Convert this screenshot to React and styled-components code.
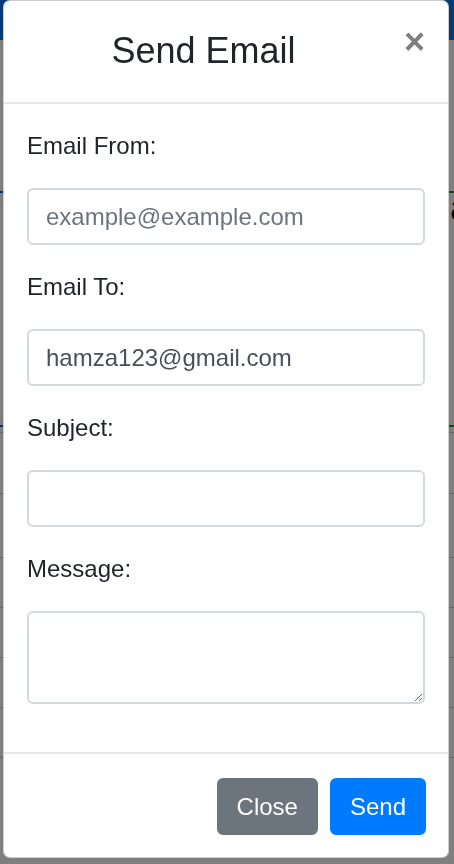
import React from "react";
import styled, { createGlobalStyle } from "styled-components";

const GlobalStyle = createGlobalStyle`
  html, body {
    margin: 0;
    padding: 0;
  }
  body {
    width: 454px;
    height: 864px;
    overflow: hidden;
    background: #ffffff;
    font-family: "Liberation Sans", Arial, sans-serif;
    color: #212529;
  }
  * { box-sizing: border-box; }
`;

/* ---------- page behind the backdrop ---------- */
const Page = styled.div`
  display: flex;
  flex-direction: column;
  height: 864px;
`;

const NavBar = styled.div`
  height: 40px;
  background: #0b74ec;
`;

const Rule = styled.div`
  margin-top: ${(p) => p.$gap}px;
  height: ${(p) => p.$h || 1}px;
  background: ${(p) => p.$color || "#dee2e6"};
`;

const PeekText = styled.div`
  display: flex;
  justify-content: flex-end;
  font-size: 36px;
  line-height: 30px;
  color: #111;
  padding-right: 0;
  margin-right: -16px;
`;

/* ---------- modal ---------- */
const Backdrop = styled.div`
  position: fixed;
  inset: 0;
  background: rgba(0, 0, 0, 0.5);
`;

const ModalLayer = styled.div`
  position: fixed;
  inset: 0;
  display: flex;
  align-items: flex-start;
  padding-left: 3px;
`;

const Dialog = styled.div`
  width: 446px;
  display: flex;
  flex-direction: column;
  background: #ffffff;
  border: 1px solid rgba(0, 0, 0, 0.2);
  border-radius: 7px;
`;

const Header = styled.div`
  display: flex;
  align-items: flex-start;
  padding: 23px 23px 24px;
  border-bottom: 2px solid #e6e9ec;
`;

const Title = styled.h5`
  flex: 1;
  margin: 0;
  text-align: center;
  font-size: 36px;
  font-weight: 500;
  line-height: 54px;
  color: #212529;
`;

const CloseX = styled.button`
  margin: -24px -24px -24px auto;
  padding: 24px;
  background: transparent;
  border: 0;
  font-family: "Liberation Sans", Arial, sans-serif;
  font-size: 36px;
  font-weight: 700;
  line-height: 1;
  color: #000;
  opacity: 0.5;
  text-shadow: 0 1px 0 #fff;
  cursor: pointer;
`;

const Body = styled.div`
  padding: 24px 23px;
`;

const FormGroup = styled.div`
  margin-bottom: 24px;
`;

const Label = styled.label`
  display: block;
  font-size: 24px;
  line-height: 36px;
  margin-bottom: 24px;
  color: #212529;
`;

const Input = styled.input`
  display: block;
  width: 100%;
  height: 57px;
  padding: 9px 17px;
  font-family: "Liberation Sans", Arial, sans-serif;
  font-size: 24px;
  line-height: 36px;
  color: #495057;
  background: #fff;
  border: 2px solid #d4d9de;
  border-radius: 6px;
  outline: none;
  &::placeholder {
    color: #6c757d;
    opacity: 1;
  }
`;

const TextArea = styled.textarea`
  display: block;
  width: 100%;
  height: 93px;
  padding: 9px 17px;
  font-family: "Liberation Sans", Arial, sans-serif;
  font-size: 24px;
  line-height: 36px;
  color: #495057;
  background: #fff;
  border: 2px solid #d4d9de;
  border-radius: 6px;
  outline: none;
`;

const Footer = styled.div`
  display: flex;
  justify-content: flex-end;
  gap: 12px;
  padding: 24px 22px 22px;
  border-top: 2px solid #e6e9ec;
`;

const Button = styled.button`
  height: 57px;
  padding: 0 18px;
  font-family: "Liberation Sans", Arial, sans-serif;
  font-size: 24px;
  line-height: 36px;
  color: #fff;
  background: ${(p) => (p.$variant === "primary" ? "#007bff" : "#6c757d")};
  border: 2px solid ${(p) => (p.$variant === "primary" ? "#007bff" : "#6c757d")};
  border-radius: 6px;
  cursor: pointer;
`;

export default function App() {
  return (
    <>
      <GlobalStyle />
      <Page>
        <NavBar />
        <Rule $gap={151} $h={2} $color="linear-gradient(to right, #0b5fd0 0 6px, #2c8a3e 6px)" />
        <PeekText>a</PeekText>
        <Rule $gap={202} $h={2} $color="linear-gradient(to right, #0b5fd0 0 6px, #2c8a3e 6px)" />
        <Rule $gap={5} $color="#c8ccd0" />
        <Rule $gap={60} $color="#c8ccd0" />
        <Rule $gap={63} $color="#c8ccd0" />
        <Rule $gap={49} $color="#c8ccd0" />
        <Rule $gap={49} $color="#c8ccd0" />
        <Rule $gap={49} $color="#c8ccd0" />
        <Rule $gap={49} $color="#c8ccd0" />
      </Page>
      <Backdrop />
      <ModalLayer>
        <Dialog role="dialog">
          <Header>
            <Title>Send Email</Title>
            <CloseX aria-label="Close">×</CloseX>
          </Header>
          <Body>
            <FormGroup>
              <Label>Email From:</Label>
              <Input type="email" placeholder="example@example.com" />
            </FormGroup>
            <FormGroup>
              <Label>Email To:</Label>
              <Input type="email" defaultValue="hamza123@gmail.com" />
            </FormGroup>
            <FormGroup>
              <Label>Subject:</Label>
              <Input type="text" />
            </FormGroup>
            <FormGroup>
              <Label>Message:</Label>
              <TextArea rows={2} />
            </FormGroup>
          </Body>
          <Footer>
            <Button>Close</Button>
            <Button $variant="primary">Send</Button>
          </Footer>
        </Dialog>
      </ModalLayer>
    </>
  );
}
